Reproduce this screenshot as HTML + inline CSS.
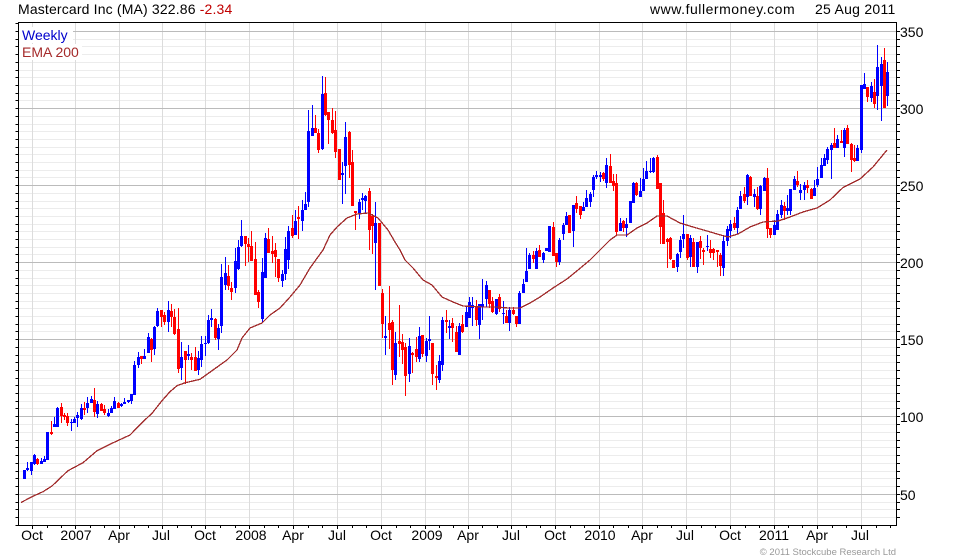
<!DOCTYPE html>
<html><head><meta charset="utf-8"><title>Mastercard Inc (MA)</title>
<style>
html,body{margin:0;padding:0;background:#fff}
svg{display:block}
text{font-family:"Liberation Sans",Arial,sans-serif;font-size:14px;fill:#000}
</style></head><body>
<svg width="980" height="560" viewBox="0 0 980 560" xmlns="http://www.w3.org/2000/svg">
<rect width="980" height="560" fill="#fff"/>
<g shape-rendering="crispEdges" fill="none" stroke-width="1">
<path stroke="#ececec" d="M19 39.5H896M19 46.5H896M19 54.5H896M19 62.5H896M19 70.5H896M19 77.5H896M19 85.5H896M19 93.5H896M19 100.5H896M19 116.5H896M19 124.5H896M19 131.5H896M19 139.5H896M19 147.5H896M19 154.5H896M19 162.5H896M19 170.5H896M19 177.5H896M19 193.5H896M19 201.5H896M19 208.5H896M19 216.5H896M19 224.5H896M19 231.5H896M19 239.5H896M19 247.5H896M19 254.5H896M19 270.5H896M19 278.5H896M19 285.5H896M19 293.5H896M19 301.5H896M19 308.5H896M19 316.5H896M19 324.5H896M19 331.5H896M19 347.5H896M19 355.5H896M19 362.5H896M19 370.5H896M19 378.5H896M19 385.5H896M19 393.5H896M19 401.5H896M19 408.5H896M19 424.5H896M19 432.5H896M19 440.5H896M19 447.5H896M19 455.5H896M19 463.5H896M19 471.5H896M19 478.5H896M19 486.5H896M19 502.5H896M19 509.5H896M19 517.5H896"/>
<path stroke="#dcdcdc" d="M32.5 23V525M75.5 23V525M119.5 23V525M162.5 23V525M205.5 23V525M249.5 23V525M293.5 23V525M337.5 23V525M381.5 23V525M425.5 23V525M468.5 23V525M511.5 23V525M555.5 23V525M599.5 23V525M642.5 23V525M686.5 23V525M730.5 23V525M774.5 23V525M817.5 23V525M861.5 23V525"/>
<path stroke="#bbb" d="M19 31.5H896M19 108.5H896M19 185.5H896M19 262.5H896M19 339.5H896M19 416.5H896M19 494.5H896"/>
<rect x="19" y="27" width="54" height="16" fill="#fff"/>
<rect x="19" y="44" width="63" height="16" fill="#fff"/>
<path stroke="#00f" d="M24.5 470V479M27.5 462V471M31.5 462V475M34.5 454V465M41.5 458V464M44.5 456V462M47.5 432V460M54.5 417V427M57.5 407V427M71.5 419V431M74.5 417V423M77.5 412V427M81.5 404V420M87.5 397V413M91.5 396V403M97.5 401V418M108.5 409V417M111.5 406V413M114.5 397V409M121.5 403V407M124.5 398V404M128.5 400V403M131.5 394V404M134.5 361V395M138.5 352V368M144.5 349V359M148.5 333V353M154.5 326V355M157.5 308V327M168.5 301V332M181.5 342V380M188.5 345V360M198.5 351V375M201.5 336V367M205.5 336V356M208.5 315V344M211.5 309V327M218.5 324V350M221.5 264V333M225.5 257V290M235.5 248V293M238.5 240V270M241.5 220V247M262.5 258V323M265.5 233V278M282.5 270V287M285.5 237V280M288.5 226V269M295.5 210V235M302.5 200V231M305.5 192V210M308.5 110V207M312.5 105V136M322.5 76V150M342.5 162V204M345.5 122V194M359.5 199V219M362.5 193V210M365.5 195V213M375.5 202V290M385.5 316V355M395.5 332V380M409.5 338V382M419.5 327V362M426.5 338V362M429.5 316V350M439.5 355V383M442.5 317V371M449.5 320V339M459.5 323V355M466.5 307V327M469.5 297V318M472.5 297V326M479.5 304V339M482.5 279V320M486.5 281V307M496.5 299V315M503.5 301V324M509.5 307V331M519.5 291V324M523.5 279V293M526.5 248V282M529.5 253V269M536.5 248V269M543.5 252V263M546.5 248V251M549.5 226V252M559.5 238V265M563.5 223V240M566.5 212V225M573.5 205V247M583.5 202V211M586.5 190V207M590.5 192V207M593.5 175V197M596.5 171V179M600.5 172V182M606.5 158V188M620.5 218V231M626.5 218V237M630.5 201V223M633.5 182V203M640.5 178V197M643.5 168V191M646.5 161V179M650.5 158V173M653.5 157V173M677.5 253V272M680.5 236V258M683.5 215V248M690.5 235V267M697.5 242V273M707.5 235V251M723.5 236V276M727.5 226V246M730.5 220V238M737.5 207V234M740.5 191V209M747.5 174V205M754.5 189V207M760.5 185V215M764.5 177V191M774.5 220V235M777.5 210V230M781.5 200V218M787.5 195V215M790.5 189V215M794.5 176V190M800.5 184V200M804.5 182V200M814.5 180V196M817.5 167V187M821.5 158V178M824.5 154V166M827.5 147V164M831.5 143V179M837.5 135V148M844.5 128V157M857.5 145V161M861.5 85V153M864.5 73V89M871.5 82V102M877.5 45V110M881.5 57V121M887.5 62V106"/>
<path stroke="#00f" stroke-width="3" d="M24.5 470V479M27.5 468V470M31.5 462V471M34.5 455V464M41.5 461V464M44.5 459V462M47.5 432V460M54.5 424V427M57.5 408V427M71.5 422V423M74.5 419V423M77.5 415V418M81.5 408V419M87.5 403V408M91.5 399V403M97.5 404V414M108.5 413V416M111.5 408V413M114.5 401V409M121.5 404V406M124.5 402V404M128.5 400V402M131.5 394V401M134.5 365V395M138.5 357V365M144.5 356V359M148.5 337V353M154.5 327V349M157.5 311V326M168.5 310V322M181.5 357V368M188.5 354V356M198.5 358V370M201.5 344V360M205.5 343V344M208.5 320V343M211.5 318V320M218.5 328V339M221.5 277V326M225.5 273V285M235.5 261V288M238.5 247V269M241.5 236V246M262.5 272V319M265.5 238V278M282.5 274V281M285.5 249V274M288.5 231V260M295.5 221V235M302.5 210V221M305.5 204V210M308.5 131V202M312.5 128V136M322.5 94V149M342.5 173V175M345.5 137V166M359.5 202V213M362.5 198V200M365.5 196V201M375.5 223V243M385.5 336V338M395.5 343V375M409.5 346V374M419.5 336V359M426.5 341V356M429.5 339V341M439.5 361V380M442.5 320V365M449.5 326V328M459.5 326V355M466.5 312V327M469.5 302V318M472.5 305V308M479.5 304V325M482.5 304V307M486.5 285V299M496.5 299V314M503.5 313V314M509.5 310V323M519.5 293V324M523.5 284V293M526.5 271V282M529.5 255V269M536.5 251V269M543.5 253V260M546.5 248V251M549.5 226V252M559.5 240V262M563.5 225V234M566.5 216V225M573.5 205V231M583.5 207V211M586.5 198V207M590.5 194V202M593.5 177V190M596.5 175V177M600.5 175V177M606.5 165V183M620.5 223V231M626.5 224V228M630.5 201V223M633.5 183V203M640.5 191V197M643.5 179V191M646.5 171V179M650.5 171V172M653.5 158V172M677.5 254V267M680.5 240V252M683.5 234V239M690.5 238V257M697.5 242V267M707.5 246V247M723.5 241V268M727.5 229V241M730.5 224V231M737.5 210V228M740.5 196V209M747.5 175V197M754.5 194V197M760.5 186V209M764.5 178V191M774.5 225V235M777.5 214V230M781.5 205V215M787.5 208V211M790.5 189V211M794.5 179V190M800.5 190V193M804.5 185V190M814.5 188V196M817.5 179V185M821.5 165V178M824.5 158V166M827.5 149V160M831.5 145V150M837.5 139V148M844.5 130V148M857.5 148V161M861.5 85V150M864.5 84V89M871.5 86V98M877.5 67V96M881.5 64V86M887.5 72V96"/>
<path stroke="#f00" d="M37.5 458V465M51.5 421V435M61.5 403V423M64.5 413V420M67.5 413V426M84.5 402V415M94.5 388V417M101.5 403V411M104.5 405V415M118.5 402V408M141.5 356V364M151.5 338V362M161.5 310V327M164.5 312V325M171.5 304V327M174.5 309V335M178.5 308V373M185.5 351V384M191.5 353V370M195.5 347V371M215.5 318V340M228.5 265V290M231.5 282V300M245.5 236V266M248.5 238V262M251.5 231V261M255.5 242V295M258.5 290V308M268.5 228V253M272.5 236V263M275.5 243V277M278.5 259V282M292.5 215V238M298.5 206V239M315.5 115V133M318.5 129V153M325.5 77V116M328.5 112V144M332.5 108V134M335.5 111V158M339.5 149V180M349.5 131V178M352.5 150V206M355.5 211V230M369.5 188V250M372.5 214V254M379.5 223V286M382.5 289V338M389.5 286V349M392.5 320V385M399.5 305V357M402.5 334V364M405.5 343V396M412.5 352V373M416.5 337V362M422.5 335V357M432.5 343V385M436.5 365V390M446.5 310V333M452.5 318V342M456.5 326V352M462.5 315V333M476.5 300V326M489.5 290V308M492.5 297V313M499.5 294V312M506.5 310V323M513.5 307V315M516.5 316V327M533.5 251V263M539.5 245V257M553.5 222V256M556.5 253V267M569.5 215V233M576.5 196V213M580.5 206V219M603.5 172V181M610.5 154V183M613.5 174V191M616.5 174V236M623.5 220V232M636.5 182V196M657.5 155V189M660.5 183V244M663.5 200V244M667.5 238V268M670.5 237V260M673.5 260V268M687.5 234V260M693.5 238V267M700.5 236V259M703.5 248V265M710.5 240V258M713.5 248V260M717.5 250V267M720.5 253V276M734.5 217V230M744.5 187V203M750.5 176V196M757.5 187V210M767.5 168V238M770.5 228V238M784.5 202V220M797.5 171V187M807.5 180V193M811.5 188V199M834.5 128V148M841.5 130V143M847.5 125V144M851.5 143V172M854.5 145V162M867.5 87V102M874.5 79V108M884.5 48V108"/>
<path stroke="#f00" stroke-width="3" d="M37.5 459V464M51.5 432V434M61.5 407V416M64.5 415V417M67.5 416V423M84.5 408V410M94.5 400V412M101.5 404V411M104.5 409V413M118.5 403V408M141.5 356V359M151.5 339V350M161.5 310V317M164.5 315V322M171.5 311V317M174.5 317V334M178.5 329V369M185.5 351V360M191.5 357V360M195.5 357V371M215.5 319V338M228.5 276V286M231.5 288V292M245.5 236V244M248.5 244V247M251.5 246V261M255.5 259V295M258.5 292V302M268.5 239V253M272.5 251V254M275.5 250V257M278.5 259V278M292.5 228V236M298.5 217V219M315.5 128V133M318.5 133V150M325.5 93V115M328.5 112V120M332.5 120V133M335.5 130V152M339.5 149V180M349.5 132V165M352.5 162V206M355.5 211V213M369.5 191V230M372.5 216V226M379.5 223V286M382.5 293V324M389.5 323V330M392.5 322V370M399.5 341V344M402.5 342V350M405.5 347V376M412.5 353V355M416.5 349V357M422.5 335V354M432.5 343V374M436.5 376V378M446.5 320V322M452.5 323V328M456.5 332V352M462.5 324V332M476.5 307V320M489.5 290V304M492.5 301V312M499.5 297V309M506.5 316V323M513.5 310V314M516.5 316V324M533.5 255V259M539.5 250V257M553.5 227V256M556.5 253V262M569.5 215V233M576.5 203V209M580.5 206V215M603.5 173V179M610.5 166V183M613.5 181V186M616.5 183V232M623.5 221V228M636.5 183V195M657.5 157V189M660.5 183V227M663.5 213V244M667.5 239V242M670.5 238V259M673.5 260V268M687.5 234V258M693.5 242V267M700.5 241V248M703.5 250V252M710.5 249V253M713.5 249V253M717.5 250V252M720.5 255V266M734.5 223V228M744.5 194V201M750.5 177V196M757.5 196V209M767.5 178V229M770.5 228V235M784.5 206V211M797.5 181V185M807.5 185V188M811.5 189V199M834.5 143V148M841.5 141V143M847.5 128V144M851.5 144V160M854.5 158V161M867.5 87V97M874.5 92V104M884.5 60V108"/>
<path stroke="#a02a2a" stroke-width="1.3" d="M21 502.5L32 496.7L43 491.7L52 486L60 478.3L68 470.7L83 462.7L97 450.7L112 443.3L130 435L143 421.7L152 413.3L162 400.7L170 391.7L177 385.7L185 382.8L200 379.3L213 370L227 360L237 350L242 338L250 328L262 323L270 315L280 308L290 297L300 285L310 268L323 250L330 235L337 227L347 218L357 214L368 213L378 218L388 230L395 242L400 250L405 260L413 268L423 280L432 285L442 297L453 302L463 306L483 307L497 307L508 308L520 308L530 303L540 297L553 288L567 279L578 270L590 260L600 250L610 240L617 235L627 235L637 228L647 223L657 216L667 216L680 223L693 227L707 231L717 234L728 237L738 234L750 227L763 222L778 221L790 217L803 212L817 208L830 200L843 187.5L860 179L873 167L887 150"/>
<path stroke="#000" d="M18.5 22.5H896.5V525.5H18.5Z"/>
<path stroke="#000" transform="translate(15.5 0)" d="M0 23.5h3M0 31.5h3M0 39.5h3M0 46.5h3M0 54.5h3M0 62.5h3M0 70.5h3M0 77.5h3M0 85.5h3M0 93.5h3M0 100.5h3M0 108.5h3M0 116.5h3M0 124.5h3M0 131.5h3M0 139.5h3M0 147.5h3M0 154.5h3M0 162.5h3M0 170.5h3M0 177.5h3M0 185.5h3M0 193.5h3M0 201.5h3M0 208.5h3M0 216.5h3M0 224.5h3M0 231.5h3M0 239.5h3M0 247.5h3M0 254.5h3M0 262.5h3M0 270.5h3M0 278.5h3M0 285.5h3M0 293.5h3M0 301.5h3M0 308.5h3M0 316.5h3M0 324.5h3M0 331.5h3M0 339.5h3M0 347.5h3M0 355.5h3M0 362.5h3M0 370.5h3M0 378.5h3M0 385.5h3M0 393.5h3M0 401.5h3M0 408.5h3M0 416.5h3M0 424.5h3M0 432.5h3M0 440.5h3M0 447.5h3M0 455.5h3M0 463.5h3M0 471.5h3M0 478.5h3M0 486.5h3M0 494.5h3M0 502.5h3M0 509.5h3M0 517.5h3M0 525.5h3"/>
<path stroke="#000" transform="translate(897 0)" d="M0 31.5h3M0 39.5h3M0 46.5h3M0 54.5h3M0 62.5h3M0 70.5h3M0 77.5h3M0 85.5h3M0 93.5h3M0 100.5h3M0 108.5h3M0 116.5h3M0 124.5h3M0 131.5h3M0 139.5h3M0 147.5h3M0 154.5h3M0 162.5h3M0 170.5h3M0 177.5h3M0 185.5h3M0 193.5h3M0 201.5h3M0 208.5h3M0 216.5h3M0 224.5h3M0 231.5h3M0 239.5h3M0 247.5h3M0 254.5h3M0 262.5h3M0 270.5h3M0 278.5h3M0 285.5h3M0 293.5h3M0 301.5h3M0 308.5h3M0 316.5h3M0 324.5h3M0 331.5h3M0 339.5h3M0 347.5h3M0 355.5h3M0 362.5h3M0 370.5h3M0 378.5h3M0 385.5h3M0 393.5h3M0 401.5h3M0 408.5h3M0 416.5h3M0 424.5h3M0 432.5h3M0 440.5h3M0 447.5h3M0 455.5h3M0 463.5h3M0 471.5h3M0 478.5h3M0 486.5h3M0 494.5h3M0 502.5h3M0 509.5h3M0 517.5h3"/>
<path stroke="#000" d="M32.5 526V529M75.5 526V529M119.5 526V529M162.5 526V529M205.5 526V529M249.5 526V529M293.5 526V529M337.5 526V529M381.5 526V529M425.5 526V529M468.5 526V529M511.5 526V529M555.5 526V529M599.5 526V529M642.5 526V529M686.5 526V529M730.5 526V529M774.5 526V529M817.5 526V529M861.5 526V529M47.5 526V528M61.5 526V528M90.5 526V528M104.5 526V528M134.5 526V528M148.5 526V528M177.5 526V528M191.5 526V528M220.5 526V528M235.5 526V528M264.5 526V528M278.5 526V528M308.5 526V528M322.5 526V528M352.5 526V528M366.5 526V528M396.5 526V528M410.5 526V528M439.5 526V528M453.5 526V528M482.5 526V528M497.5 526V528M526.5 526V528M540.5 526V528M570.5 526V528M584.5 526V528M613.5 526V528M628.5 526V528M657.5 526V528M671.5 526V528M701.5 526V528M715.5 526V528M745.5 526V528M759.5 526V528M788.5 526V528M802.5 526V528M832.5 526V528M846.5 526V528M876.5 526V528M890.5 526V528"/>
</g>
<text x="18" y="14" style="letter-spacing:.16px">Mastercard Inc (MA) 322.86 <tspan style="fill:#c00000">-2.34</tspan></text>
<text x="650" y="14" style="letter-spacing:.53px">www.fullermoney.com</text>
<text x="815" y="14" style="letter-spacing:.27px">25 Aug 2011</text>
<text x="22" y="40" style="fill:#0000cc">Weekly</text>
<text x="22" y="57" style="fill:#a52a2a">EMA 200</text>
<g>
<text x="900" y="37">350</text>
<text x="900" y="114">300</text>
<text x="900" y="191">250</text>
<text x="900" y="268">200</text>
<text x="900" y="345">150</text>
<text x="900" y="422">100</text>
<text x="900" y="500">50</text>
</g>
<g text-anchor="middle">
<text x="32" y="540">Oct</text>
<text x="76" y="540">2007</text>
<text x="119" y="540">Apr</text>
<text x="161" y="540">Jul</text>
<text x="205" y="540">Oct</text>
<text x="251" y="540">2008</text>
<text x="293" y="540">Apr</text>
<text x="337" y="540">Jul</text>
<text x="381" y="540">Oct</text>
<text x="427" y="540">2009</text>
<text x="468" y="540">Apr</text>
<text x="511" y="540">Jul</text>
<text x="555" y="540">Oct</text>
<text x="600" y="540">2010</text>
<text x="642" y="540">Apr</text>
<text x="685" y="540">Jul</text>
<text x="730" y="540">Oct</text>
<text x="774" y="540">2011</text>
<text x="817" y="540">Apr</text>
<text x="860" y="540">Jul</text>
</g>
<text x="896" y="555" text-anchor="end" style="font-size:9.5px;fill:#999">© 2011 Stockcube Research Ltd</text>
</svg>
</body></html>
